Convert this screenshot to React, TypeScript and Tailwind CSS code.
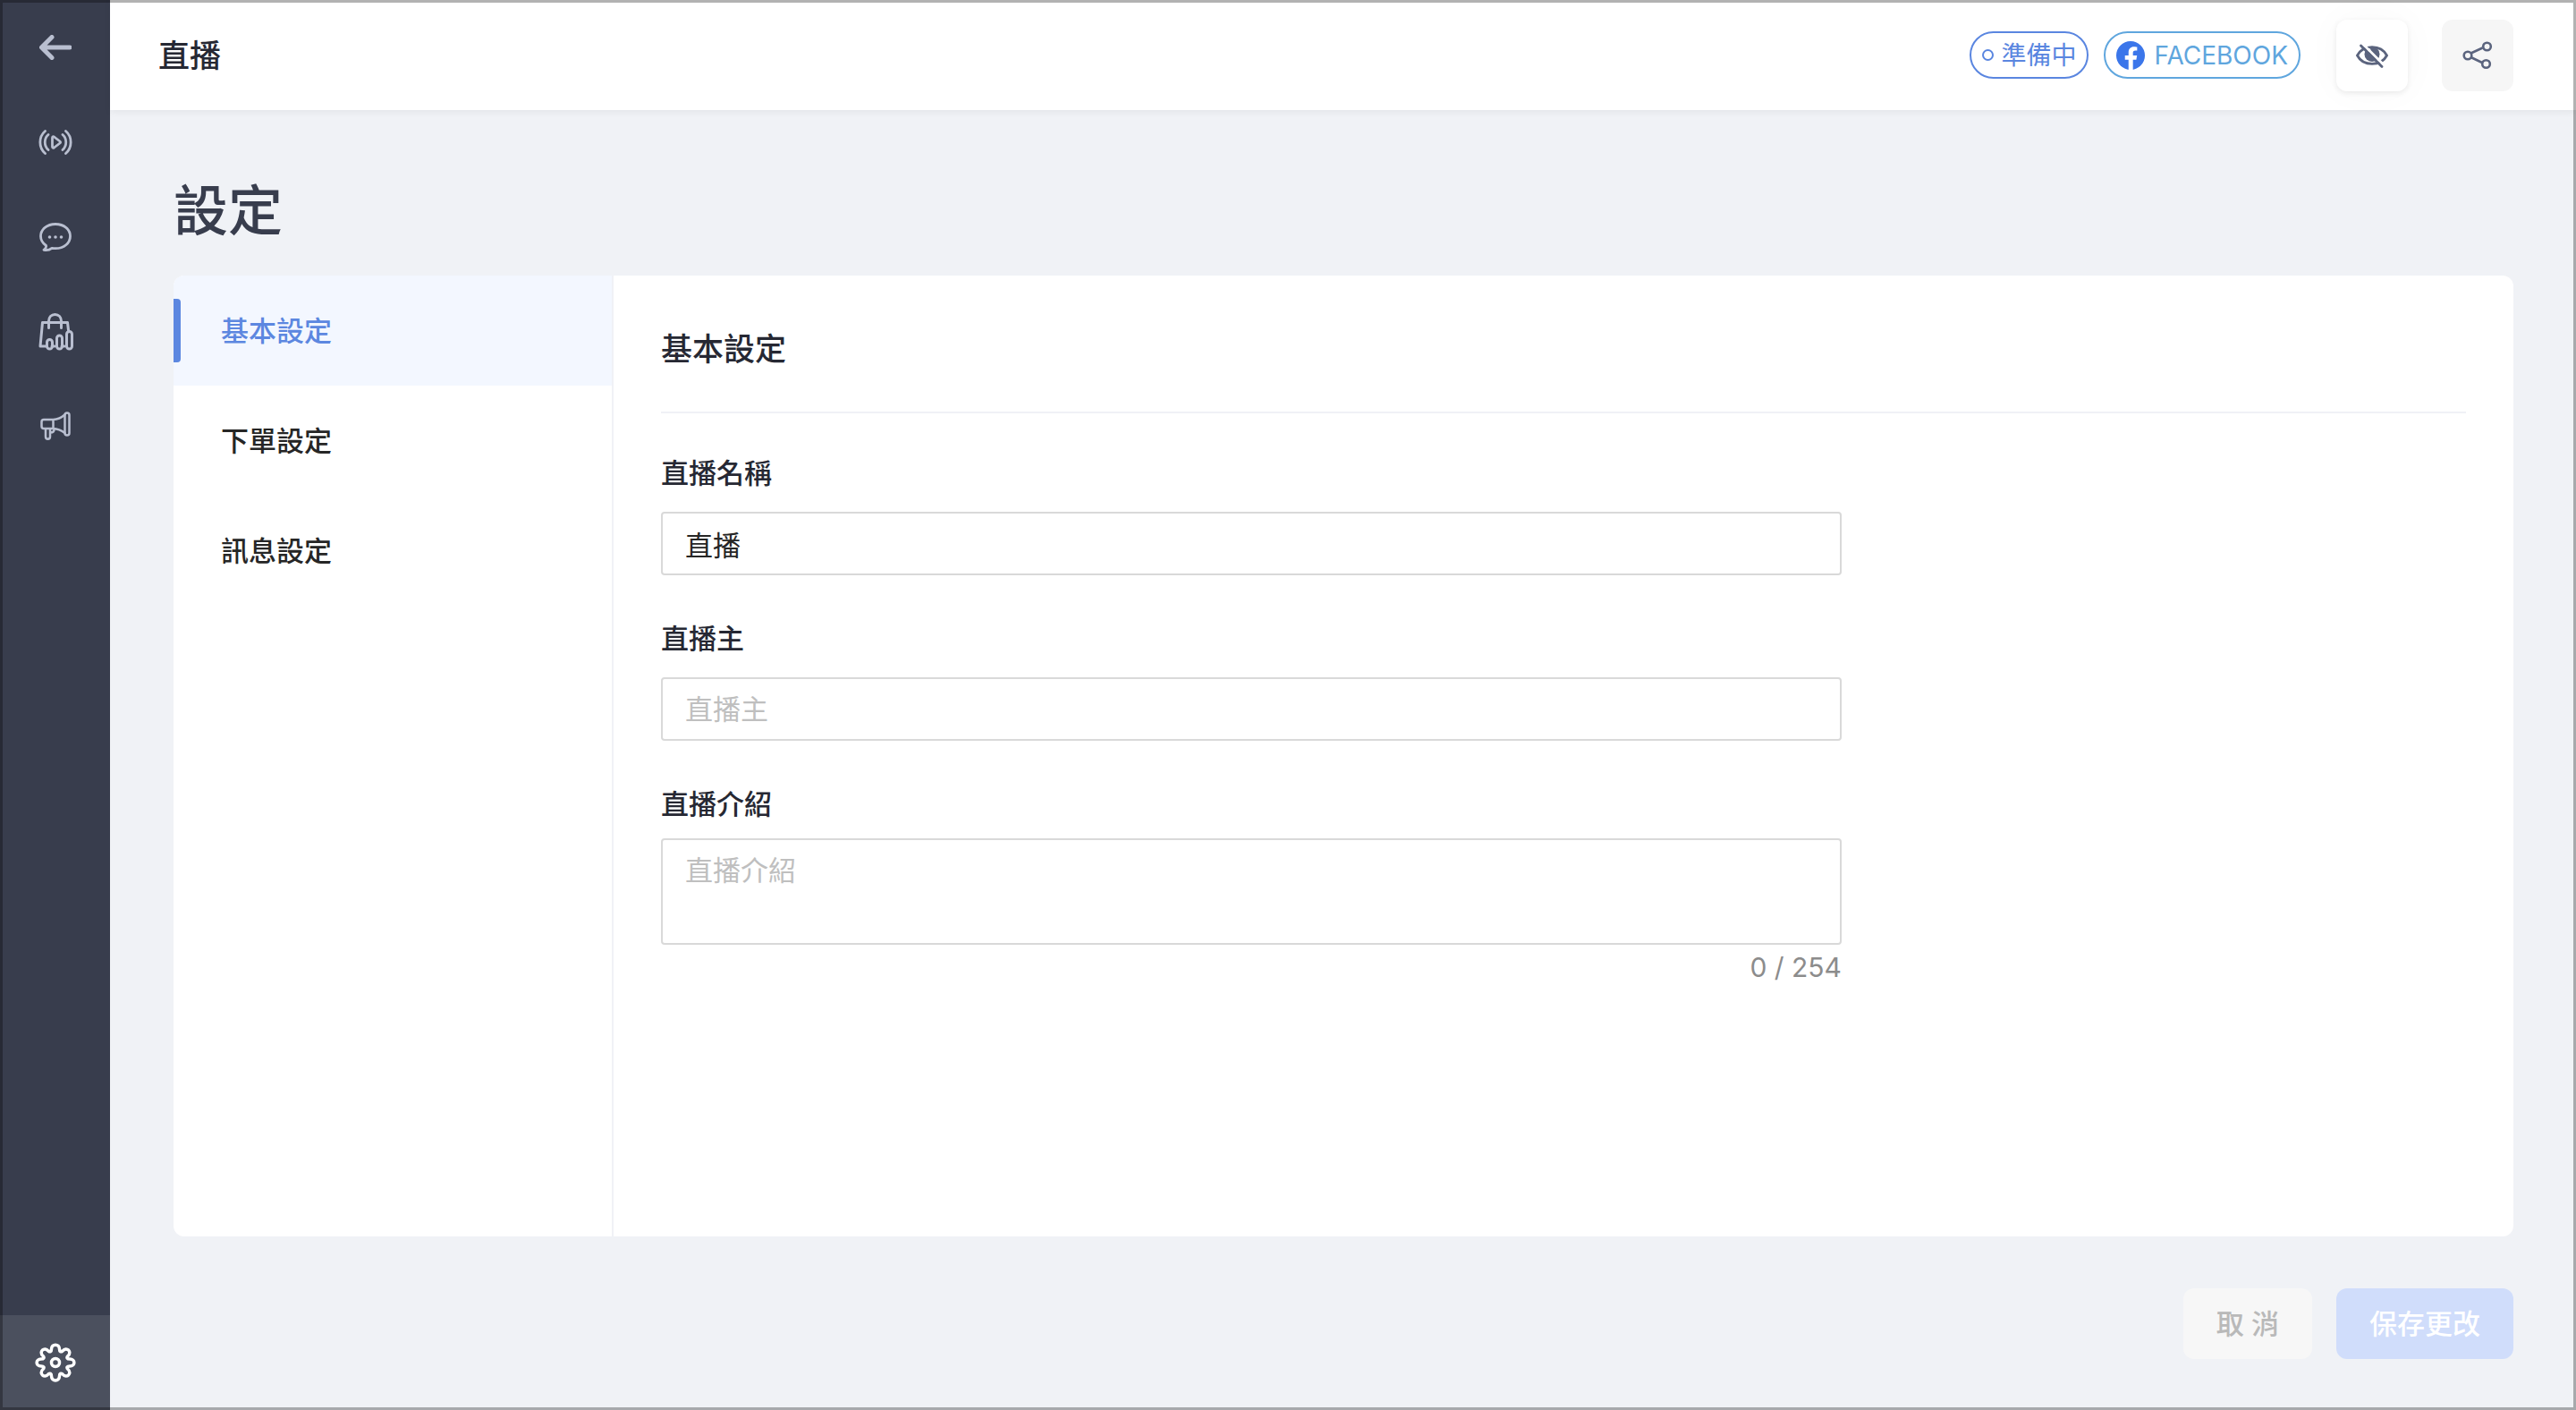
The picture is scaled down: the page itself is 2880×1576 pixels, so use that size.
import { FC, ReactNode, useState } from "react";

const menuItems = ["基本設定", "下單設定", "訊息設定"];

const BackIcon: FC = () => (
   <svg viewBox="0 0 36 28" className="w-9 h-7" fill="none" stroke="currentColor" strokeWidth="5" strokeLinecap="round" strokeLinejoin="round">
      <path d="M14 2.5 2.5 14 14 25.5M3 14h31" />
   </svg>
);

const LiveIcon: FC = () => (
   <svg viewBox="0 0 38 28" className="w-[38px] h-7" fill="none" stroke="currentColor" strokeWidth="2.8" strokeLinecap="round" strokeLinejoin="round">
      <path d="M7.5 1.5C0 8 0 20 7.5 26.5M11 5.5c-5 4.5-5 12.5 0 17M30.5 1.5C38 8 38 20 30.5 26.5M27 5.5c5 4.5 5 12.5 0 17" />
      <path d="M15.5 9v10c0 1.3 1 1.6 2 1l6.5-5c.8-.6.8-1.3 0-2l-6.5-5c-1-.7-2-.3-2 1Z" />
   </svg>
);

const ChatIcon: FC = () => (
   <svg viewBox="0 0 36 32" className="w-9 h-8" fill="none" stroke="currentColor" strokeWidth="2.8" strokeLinejoin="round">
      <path d="M18 1.5C8.5 1.5 1.5 7.5 1.5 15c0 4.7 2.5 8 6 10.5.5 2-.6 3.5-2.5 4.8 3 .6 6.5 0 9-2 1.3.3 2.6.4 4 .4 9.5 0 16.5-6 16.5-13.7S27.5 1.5 18 1.5Z" />
      <g fill="currentColor" stroke="none">
         <circle cx="11.5" cy="16" r="1.8" />
         <circle cx="18" cy="16" r="1.8" />
         <circle cx="24.5" cy="16" r="1.8" />
      </g>
   </svg>
);

const OrderIcon: FC = () => (
   <svg viewBox="0 0 40 42" className="w-10 h-[42px]" fill="none" stroke="currentColor" strokeWidth="3" strokeLinecap="round" strokeLinejoin="round">
      <path d="M10.5 37H3L5.500 10.500h28L34.500 19M12.500 16.500V9c0-4.500 3-7.500 7-7.500s7 3 7 7.500v7.500M16 37h3M27 37h3" />
      <rect x="10.5" y="29.5" width="6" height="10.5" rx="3" />
      <rect x="21.5" y="25" width="6" height="15" rx="3" />
      <rect x="32.5" y="20.5" width="6" height="19.5" rx="3" />
   </svg>
);

const PromoIcon: FC = () => (
   <svg viewBox="0 0 34 34" className="w-[34px] h-[34px]" fill="none" stroke="currentColor" strokeWidth="2.5" strokeLinecap="round" strokeLinejoin="round">
      <path d="M14.5 9H4C2.5 9 1.5 10 1.5 11.5v5C1.5 18 2.5 19 4 19h10.5V9ZM14.5 9C19 8.8 23.5 7 27.5 3.5M14.5 19c4.5.2 9 2 13 5" />
      <rect x="27.5" y="1.5" width="5" height="25" rx="2.5" />
      <path d="M6 19.5V28c0 3.5 5 3.5 5 0v-8.5M11.5 23.5c2.5 0 4-1 4-3.5" />
   </svg>
);

const GearIcon: FC = () => (
   <svg viewBox="0 0 46 44" className="w-[46px] h-11" fill="none" stroke="currentColor" strokeWidth="3.5" strokeLinejoin="round">
      <path d="M18.5 7C18.5 .5 27.5 .5 27.5 7C27.5 10 29 10.5 31 9C35.5 3.5 42 10 37 14.5C35 16.5 36 18 39 18C45.5 18 45.5 26 39 26C36 26 35 27.5 37 29.5C42 34 35.5 40.5 31 35C29 33.5 27.5 34 27.5 37C27.5 43.5 18.5 43.5 18.5 37C18.5 34 17 33.5 15 35C10.5 40.5 4 34 9 29.5C11 27.5 10 26 7 26C.5 26 .5 18 7 18C10 18 11 16.5 9 14.5C4 10 10.5 3.5 15 9C17 10.5 18.5 10 18.5 7Z" />
      <circle cx="23" cy="22" r="4.5" />
   </svg>
);

const FacebookIcon: FC = () => (
   <svg viewBox="0 0 24 24" className="w-8 h-8">
      <circle cx="12" cy="12" r="12" fill="#3b76ea" />
      <path fill="#fff" d="M10.3 24v-8.500H7.300V12h3V9.400c0-3 1.800-4.700 4.500-4.700 1.300 0 2.700.2 2.700.2v3H16c-1.500 0-2 .9-2 1.900V12h3.400l-.6 3.500H14V24Z" />
   </svg>
);

const EyeOffIcon: FC = () => (
   <svg viewBox="0 0 36 36" className="w-9 h-9" fill="none" stroke="currentColor" strokeWidth="2.8">
      <path d="M1.5 18C8 5.5 28 5.5 34.5 18C28 30.5 8 30.5 1.5 18Z" />
      <circle cx="18" cy="16.5" r="8.5" fill="currentColor" stroke="none" />
      <circle cx="14.5" cy="12" r="2" fill="#fff" stroke="none" />
      <path stroke="#fff" d="m7.5 5 25 25" />
      <path strokeLinecap="round" d="m5.5 7 23.5 23.5" />
   </svg>
);

const ShareIcon: FC = () => (
   <svg viewBox="0 0 34 32" className="w-[34px] h-8" fill="none" stroke="currentColor" strokeWidth="2.6">
      <path d="m9.5 13.5 13-6M9.5 18l12.5 6" />
      <circle cx="6" cy="16" r="4.3" />
      <circle cx="27.5" cy="6" r="4.3" />
      <circle cx="26.5" cy="25.5" r="4.3" />
   </svg>
);

const SideButton: FC<{ label: string; children: ReactNode }> = ({ label, children }) => (
   <button type="button" aria-label={label} className="flex items-center justify-center w-full h-[106px]">
      {children}
   </button>
);

const App: FC = () => {
   const [active, setActive] = useState(0);
   const [name, setName] = useState("直播");
   const [host, setHost] = useState("");
   const [intro, setIntro] = useState("");

   return (
      <div className="relative flex min-h-screen bg-[#f0f2f6] text-[31px] leading-[46px] text-[#262626] font-['Inter','Noto_Sans_CJK_TC',sans-serif]">
         <aside className="flex flex-col justify-between shrink-0 w-[123px] bg-[#383d4d] text-[#b9bfd0]">
            <nav className="flex flex-col">
               <SideButton label="返回"><BackIcon /></SideButton>
               <SideButton label="直播"><LiveIcon /></SideButton>
               <SideButton label="留言"><ChatIcon /></SideButton>
               <SideButton label="訂單"><OrderIcon /></SideButton>
               <SideButton label="推廣"><PromoIcon /></SideButton>
            </nav>
            <button type="button" aria-label="設定" className="flex items-center justify-center h-[106px] bg-[#4b505e] text-white">
               <GearIcon />
            </button>
         </aside>

         <div className="flex flex-col grow min-w-0">
            <header className="flex items-center justify-between h-[123px] pl-[54px] pr-[70px] bg-white shadow-[0_2px_8px_rgba(0,0,0,0.06)]">
               <h2 className="text-[35px] font-medium text-[#262833]">直播</h2>
               <div className="flex items-center">
                  <span className="flex items-center gap-2 h-[53px] px-3 mr-[17px] rounded-full border-2 border-[#5a86e0] text-[#5a86e0] text-[28px]">
                     <span className="w-[13px] h-[13px] rounded-full border-2 border-current" />
                     準備中
                  </span>
                  <span className="flex items-center gap-2.5 h-[53px] px-3 mr-10 rounded-full border-2 border-[#5fa6de] text-[#5fa6de] text-[28px]">
                     <FacebookIcon />
                     FACEBOOK
                  </span>
                  <button type="button" aria-label="隱藏" className="flex items-center justify-center w-20 h-20 mr-[38px] rounded-xl bg-white text-[#5b647e] shadow-[0_2px_6px_rgba(0,0,0,0.08),0_0_40px_rgba(0,0,0,0.03)]">
                     <EyeOffIcon />
                  </button>
                  <button type="button" aria-label="分享" className="flex items-center justify-center w-20 h-20 rounded-xl bg-[#f6f6f6] text-[#5b647e]">
                     <ShareIcon />
                  </button>
               </div>
            </header>

            <main className="flex flex-col grow pl-[71px] pr-[70px] pt-[67px] pb-[57px]">
               <h1 className="text-[61px] leading-[92px] font-medium text-[#383d4d]">設定</h1>

               <section className="flex grow mt-[26px] bg-white rounded-xl overflow-hidden">
                  <div className="flex flex-col shrink-0 w-[492px] border-r-2 border-[#f0f1f6]">
                     {menuItems.map((item, i) => (
                        <button
                           key={item}
                           type="button"
                           onClick={() => setActive(i)}
                           className={`flex items-center h-[123px] font-medium ${active === i ? "bg-[#f3f7ff] text-[#5c87e0]" : ""}`}
                        >
                           <span className={`w-2 h-[71px] mr-[45px] rounded-r ${active === i ? "bg-[#5c87e0]" : ""}`} />
                           {item}
                        </button>
                     ))}
                  </div>

                  <form className="grow px-[53px] font-medium text-[#262833]">
                     <h3 className="flex items-center h-[154px] pt-3 text-[35px] border-b-2 border-[#f0f1f6]">基本設定</h3>
                     <div className="flex flex-col w-[1320px] max-w-full">
                        <label htmlFor="live-name" className="mt-11">直播名稱</label>
                        <input
                           id="live-name"
                           value={name}
                           onChange={(e) => setName(e.target.value)}
                           className="h-[71px] mt-5 px-[25px] border-2 border-[#d9d9d9] rounded font-normal text-[#262626]"
                        />
                        <label htmlFor="live-host" className="mt-12">直播主</label>
                        <input
                           id="live-host"
                           value={host}
                           onChange={(e) => setHost(e.target.value)}
                           placeholder="直播主"
                           className="h-[71px] mt-5 px-[25px] border-2 border-[#d9d9d9] rounded font-normal placeholder:text-[#bfbfbf]"
                        />
                        <label htmlFor="live-intro" className="mt-12">直播介紹</label>
                        <textarea
                           id="live-intro"
                           value={intro}
                           maxLength={254}
                           onChange={(e) => setIntro(e.target.value)}
                           placeholder="直播介紹"
                           className="h-[119px] mt-[15px] px-[25px] py-[11px] border-2 border-[#d9d9d9] rounded resize-none font-normal placeholder:text-[#bfbfbf]"
                        />
                        <span className="self-end mt-0.5 text-[30px] font-normal text-[#8c8c8c]">{intro.length} / 254</span>
                     </div>
                  </form>
               </section>

               <div className="flex justify-end gap-[27px] mt-[58px] font-medium">
                  <button type="button" disabled className="h-[79px] w-36 rounded-xl bg-[#f7f7f7] text-[#b9b9b9]">
                     取 消
                  </button>
                  <button type="submit" disabled className="h-[79px] w-[198px] rounded-xl bg-[#d0ddfb] text-white">
                     保存更改
                  </button>
               </div>
            </main>
         </div>

         {/* window frame */}
         <div className="absolute inset-0 border-3 border-black/30 pointer-events-none" />
      </div>
   );
};

export default App;
